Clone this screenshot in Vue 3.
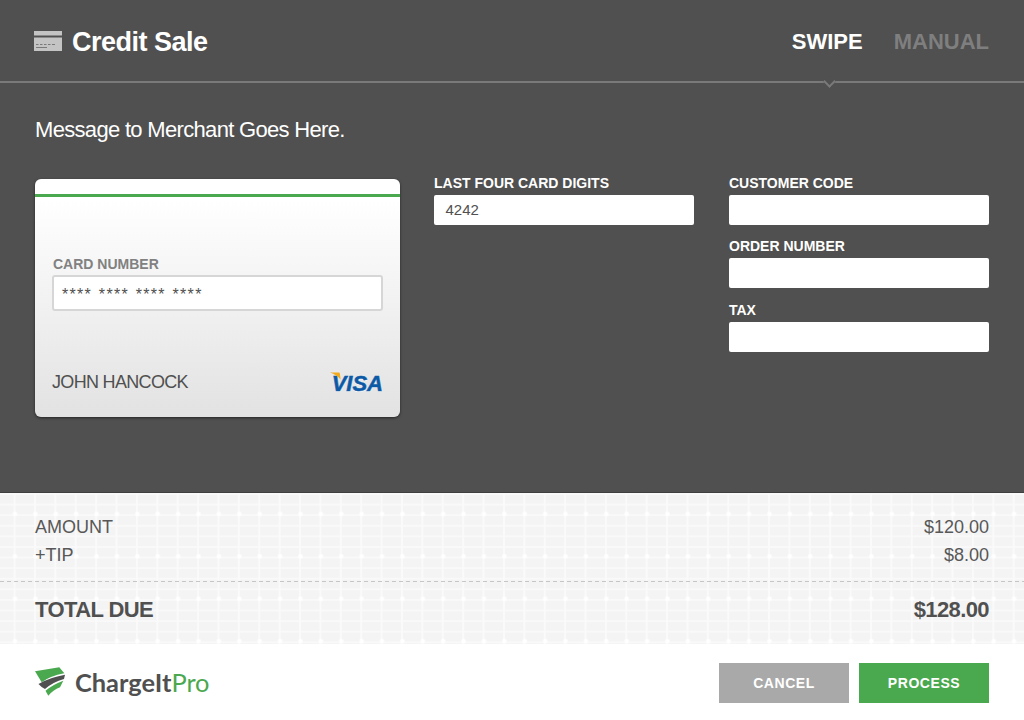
<script setup>
const rightFields = [
  { label: 'CUSTOMER CODE', value: '' },
  { label: 'ORDER NUMBER', value: '' },
  { label: 'TAX', value: '' }
]
</script>

<template>
  <div class="page">
    <section class="panel">
      <header class="head">
        <div class="title">
          <svg class="card-icon" width="28" height="20" viewBox="0 0 28 20">
            <rect x="0" y="0" width="28" height="4.5" fill="#c4c4c4" />
            <rect x="0" y="6.5" width="28" height="13.5" fill="#c4c4c4" />
            <path d="M2 13.5h2.5M6 13.5h2.5M10 13.5h2.5M14 13.5h2.5M18 13.5h3M2 16.5h11" stroke="#7a7a7a" stroke-width="1" />
          </svg>
          <h1>Credit Sale</h1>
        </div>
        <nav class="tabs">
          <span class="tab active">SWIPE</span>
          <span class="tab">MANUAL</span>
        </nav>
      </header>

      <p class="message">Message to Merchant Goes Here.</p>

      <div class="form">
        <div class="card">
          <div class="stripe"></div>
          <div class="card-body">
            <div class="card-label">CARD NUMBER</div>
            <div class="card-input">**** **** **** ****</div>
            <div class="card-foot">
              <span class="holder">JOHN HANCOCK</span>
              <span class="visa">
                <span class="visa-text">VISA</span>
                <svg class="visa-flick" width="11" height="8" viewBox="0 0 11 8">
                  <path d="M0 0.5H8.5C9.5 0.5 9.7 1 9.9 1.8L10.6 7.5C8 4.5 4.5 2 0 0.5Z" fill="#f2a91c" />
                </svg>
              </span>
            </div>
          </div>
        </div>

        <div class="col">
          <div class="field">
            <label>LAST FOUR CARD DIGITS</label>
            <div class="input">4242</div>
          </div>
        </div>

        <div class="col last">
          <div v-for="f in rightFields" :key="f.label" class="field">
            <label>{{ f.label }}</label>
            <div class="input">{{ f.value }}</div>
          </div>
        </div>
      </div>
    </section>

    <section class="summary">
      <div class="row"><span>AMOUNT</span><span>$120.00</span></div>
      <div class="row"><span>+TIP</span><span>$8.00</span></div>
      <div class="dash"></div>
      <div class="row total"><span>TOTAL DUE</span><span>$128.00</span></div>
    </section>

    <footer class="foot">
      <div class="logo">
        <svg width="31" height="30" viewBox="0 0 31 30">
          <path d="M0 4.3L24.3 0.3L29.3 6.3Q15 9 6.7 15.3Z" fill="#4aa84f" />
          <path d="M3.5 17Q14 10.5 30 7.7L29 12Q18 15 10 22Q6 20 3.5 17Z" fill="#505050" />
          <path d="M10.5 23.7Q18 17.5 28.3 13.7L25 20.3Q18 23 13.3 28.7Z" fill="#4aa84f" />
        </svg>
        <span class="logo-text">ChargeIt<span class="pro">Pro</span></span>
      </div>
      <div class="actions">
        <button class="btn cancel">CANCEL</button>
        <button class="btn process">PROCESS</button>
      </div>
    </footer>
  </div>
</template>

<style>
html, body { margin: 0; background: #fff; }
</style>

<style scoped>
.page {
  width: 1024px;
  height: 720px;
  display: flex;
  flex-direction: column;
  overflow: hidden;
  font-family: "Liberation Sans", Arial, sans-serif;
  color: #505050;
}
.panel {
  height: 493px;
  flex: none;
  box-sizing: border-box;
  background: #505050;
  border-bottom: 1px solid #3f3f3f;
}
.head {
  position: relative;
  height: 83px;
  box-sizing: border-box;
  padding: 2px 35px 0 34px;
  display: flex;
  justify-content: space-between;
  align-items: center;
  border-bottom: 2px solid #7a7a7a;
}
.head::after {
  content: "";
  position: absolute;
  left: 825px;
  bottom: -2px;
  width: 7px;
  height: 7px;
  background: #505050;
  border-right: 2px solid #7a7a7a;
  border-bottom: 2px solid #7a7a7a;
  transform: translateY(3px) rotate(45deg);
}
.title { display: flex; align-items: center; gap: 10px; }
.card-icon { display: block; margin-top: -2px; }
h1 {
  margin: 1px 0 0;
  font-size: 27px;
  font-weight: 700;
  letter-spacing: -0.5px;
  color: #fff;
}
.tabs { display: flex; gap: 31px; margin-top: 1px; }
.tab {
  font-size: 22px;
  font-weight: 700;
  color: #7f7f7f;
}
.tab.active { color: #fff; }
.message {
  margin: 0;
  padding: 34px 35px 0;
  font-size: 22px;
  line-height: 26px;
  letter-spacing: -0.68px;
  color: #fff;
}
.form {
  display: grid;
  grid-template-columns: 365px 260px 261px;
  column-gap: 34px;
  padding: 36px 0 0 35px;
}
.col { margin-top: -4px; }
.col.last { padding-left: 1px; }
.field { display: flex; flex-direction: column; margin-bottom: 13.4px; }
.field label {
  font-size: 14px;
  line-height: 16px;
  font-weight: 700;
  color: #fff;
  margin-bottom: 4px;
}
.input {
  height: 30px;
  box-sizing: border-box;
  background: #fff;
  border-radius: 2px;
  padding: 0 11.5px;
  font-size: 15px;
  line-height: 30px;
  color: #505050;
}
.card {
  height: 238px;
  box-sizing: border-box;
  border-radius: 6px;
  background: linear-gradient(#ffffff 0%, #ffffff 9%, #e2e2e2 100%);
  box-shadow: 0 1px 3px rgba(0, 0, 0, 0.55);
  padding-top: 15px;
}
.stripe { height: 3px; background: #4aa84f; }
.card-body { padding: 59px 17px 0 17px; }
.card-label {
  font-size: 14px;
  line-height: 16px;
  font-weight: 700;
  color: #818181;
  padding-left: 1px;
  margin-bottom: 3px;
}
.card-input {
  height: 36px;
  box-sizing: border-box;
  background: #fff;
  border: 2px solid #d6d6d6;
  border-radius: 3px;
  padding-left: 8px;
  font-size: 16px;
  line-height: 36px;
  letter-spacing: 1.3px;
  word-spacing: 1px;
  color: #505050;
}
.card-foot {
  display: flex;
  justify-content: space-between;
  align-items: center;
  margin-top: 59px;
  height: 24px;
}
.holder { font-size: 18px; letter-spacing: -0.68px; color: #505050; }
.visa { position: relative; display: block; height: 20px; margin-top: 4px; }
.visa-flick { position: absolute; left: -2px; top: -2px; }
.visa-text {
  font-size: 22px;
  line-height: 20px;
  font-weight: 700;
  font-style: italic;
  -webkit-text-stroke: 0.5px #0c5aa6;
  color: #0c5aa6;
  text-shadow: 0 1px 0 #fff;
}
.summary {
  height: 151px;
  flex: none;
  box-sizing: border-box;
  padding: 20px 35px 0;
  background-color: #f4f4f4;
  background-image:
    radial-gradient(circle at 15px 21px, #ffffff 0, #ffffff 1.5px, transparent 3px),
    linear-gradient(90deg, transparent 0, transparent 14px, #fafafa 14px, #fafafa 16px, transparent 16px),
    linear-gradient(180deg, #f9f9f9 0, #f9f9f9 1.5px, transparent 1.5px);
  background-size: 20.4px 42.4px, 20.4px 100%, 100% 10.6px;
}
.row {
  display: flex;
  justify-content: space-between;
  font-size: 18px;
  line-height: 28px;
  color: #585858;
  height: 28px;
}
.dash {
  height: 1px;
  margin: 12px -35px 0;
  background: repeating-linear-gradient(90deg, #c6c6c6 0, #c6c6c6 4px, transparent 4px, transparent 7px);
}
.row.total {
  margin-top: 14px;
  font-size: 22px;
  font-weight: 700;
  letter-spacing: -0.6px;
  color: #505050;
}
.foot {
  flex: 1;
  display: flex;
  justify-content: space-between;
  align-items: center;
  padding: 2px 35px 0;
  background: #fff;
}
.logo { display: flex; align-items: center; gap: 9px; margin-top: -2px; }
.logo svg { display: block; }
.logo-text {
  font-family: Lato, "Open Sans", sans-serif;
  font-size: 25.4px;
  font-weight: 700;
  color: #505050;
}
.pro { color: #4aa84f; font-weight: 400; }
.actions { display: flex; gap: 10px; }
.btn {
  width: 130px;
  height: 40px;
  border: 0;
  font-family: inherit;
  font-size: 14px;
  font-weight: 700;
  letter-spacing: 0.55px;
  color: #fff;
  padding: 0;
}
.cancel { background: #a9a9a9; }
.process { background: #4aa84f; }
</style>
